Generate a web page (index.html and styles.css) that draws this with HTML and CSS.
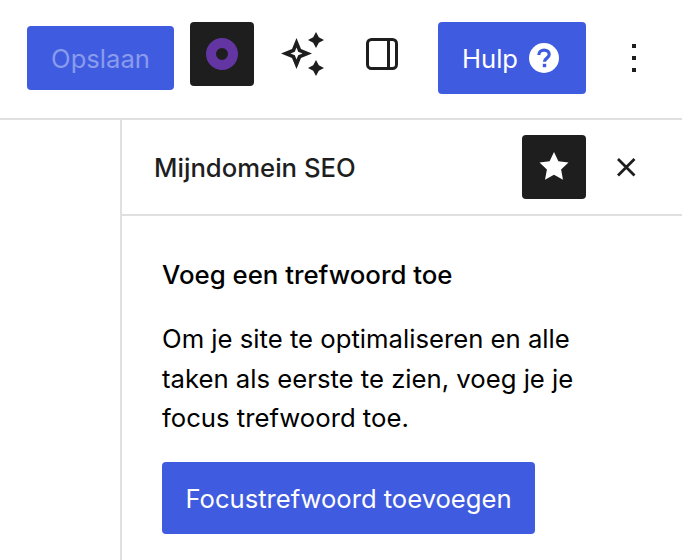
FILE: index.html
```html
<!DOCTYPE html>
<html lang="nl">
<head>
<meta charset="utf-8">
<title>Mijndomein SEO</title>
<link rel="stylesheet" href="styles.css">
</head>
<body>
<header class="toolbar">
  <button class="btn btn-save">Opslaan</button>
  <button class="icon-btn icon-btn-dark">
    <svg width="32" height="32" viewBox="0 0 32 32"><circle cx="16" cy="16" r="11" fill="none" stroke="#6335a3" stroke-width="10"/></svg>
  </button>
  <button class="icon-btn">
    <svg width="48" height="48" viewBox="0 0 48 48" fill="#1e1e1e"><path fill-rule="evenodd" d="M18.500 8L23 19 34 23.500 23 28 18.500 39 14 28 3 23.500 14 19ZM18.500 17.500L16.800 21.800 12.500 23.500 16.800 25.200 18.500 29.500 20.200 25.200 24.500 23.500 20.200 21.800Z"/><path d="M38 2L40.800 7.200 46 10 40.800 12.800 38 18 35.200 12.800 30 10 35.200 7.200ZM38 30L40.800 35.200 46 38 40.800 40.800 38 46 35.200 40.800 30 38 35.200 35.200Z"/></svg>
  </button>
  <button class="icon-btn">
    <svg width="36" height="36" viewBox="0 0 36 36" fill="none" stroke="#1e1e1e" stroke-width="3"><rect x="3.500" y="3.500" width="29" height="29" rx="4"/><path d="M24.500 3.500v29"/></svg>
  </button>
  <button class="btn btn-help">Hulp
    <svg width="32" height="32" viewBox="0 0 32 32"><circle cx="16" cy="16" r="15" fill="#fff"/><path d="M10.800 13c0-3 2.300-4.900 5.300-4.900s5.100 1.800 5.100 4.400c0 3.800-4.700 3.400-4.700 7.300" fill="none" stroke="#3f5be0" stroke-width="3.200"/><rect x="14.800" y="21.800" width="3.400" height="3.400" fill="#3f5be0"/></svg>
  </button>
  <button class="icon-btn icon-btn-more">
    <svg width="8" height="48" viewBox="0 0 8 48" fill="#1e1e1e"><rect x="3" y="14" width="4" height="4"/><rect x="3" y="26" width="4" height="4"/><rect x="3" y="38" width="4" height="4"/></svg>
  </button>
</header>
<div class="workspace">
  <div class="canvas"></div>
  <aside class="sidebar">
    <div class="sidebar-head">
      <h2 class="sidebar-title">Mijndomein SEO</h2>
      <button class="icon-btn icon-btn-dark">
        <svg width="32" height="32" viewBox="0 0 32 32" fill="#fff"><path d="M16 1l4.400 9.300 10.100 1.300-7.400 7 1.900 10.100-9-5-9 5 1.900-10.100-7.400-7 10.100-1.300z"/></svg>
      </button>
      <button class="icon-btn icon-btn-close">
        <svg width="24" height="24" viewBox="0 0 24 24" fill="none" stroke="#1e1e1e" stroke-width="2.800"><path d="M4 4l16.500 16.500M20.500 4L4 20.500"/></svg>
      </button>
    </div>
    <div class="sidebar-body">
      <h3 class="body-title">Voeg een trefwoord toe</h3>
      <p class="body-text">Om je site te optimaliseren en alle taken als eerste te zien, voeg je je focus trefwoord toe.</p>
      <button class="btn btn-focus">Focustrefwoord toevoegen</button>
    </div>
  </aside>
</div>
</body>
</html>
```
FILE: styles.css
```css
* { box-sizing: border-box; }
html, body { height: 100%; }
body {
  margin: 0;
  overflow: hidden;
  background: #fff;
  color: #1e1e1e;
  font-family: Inter, "Liberation Sans", sans-serif;
  font-size: 25.6px;
}
button {
  font-family: inherit;
  border: 0;
  padding: 0;
  background: none;
  color: inherit;
}
.toolbar {
  display: flex;
  align-items: flex-start;
  height: 120px;
  padding: 22px 0 0 27px;
  border-bottom: 2px solid #e0e0e0;
}
.btn {
  display: flex;
  align-items: center;
  justify-content: center;
  background: #3f5be0;
  color: #fff;
  border-radius: 4px;
  font-size: 25.6px;
}
.btn-save {
  width: 147px;
  height: 64px;
  margin-top: 4px;
  margin-right: 16px;
  color: #8a9bec;
}
.icon-btn {
  display: flex;
  align-items: center;
  justify-content: center;
  flex: none;
  width: 64px;
  height: 64px;
  margin-right: 16px;
  border-radius: 4px;
}
.icon-btn-dark { background: #1e1e1e; }
.btn-help {
  justify-content: flex-start;
  width: 148px;
  height: 72px;
  padding-left: 24px;
  gap: 10px;
  margin-left: 8px;
  margin-right: 15px;
}
.workspace {
  display: flex;
  height: 440px;
}
.canvas {
  flex: none;
  width: 122px;
  border-right: 2px solid #e0e0e0;
}
.sidebar { flex: 1; }
.sidebar-head {
  display: flex;
  align-items: center;
  height: 96px;
  padding-left: 32px;
  border-bottom: 2px solid #e0e0e0;
}
.sidebar-title {
  flex: 1;
  margin: 0;
  font-size: 25.7px;
  font-weight: 500;
}
.sidebar-head .icon-btn-dark { margin-right: 8px; }
.icon-btn-close { margin-right: 24px; }
.sidebar-body { padding: 40px 96px 0 40px; }
.body-title {
  margin: 0 0 25px;
  font-size: 25.8px;
  line-height: 38px;
  font-weight: 500;
  color: #000;
  white-space: nowrap;
}
.body-text {
  margin: 0 0 24.500px;
  font-size: 25.7px;
  line-height: 39.500px;
  color: #000;
}
.btn-focus {
  width: 373px;
  height: 72px;
}
```
